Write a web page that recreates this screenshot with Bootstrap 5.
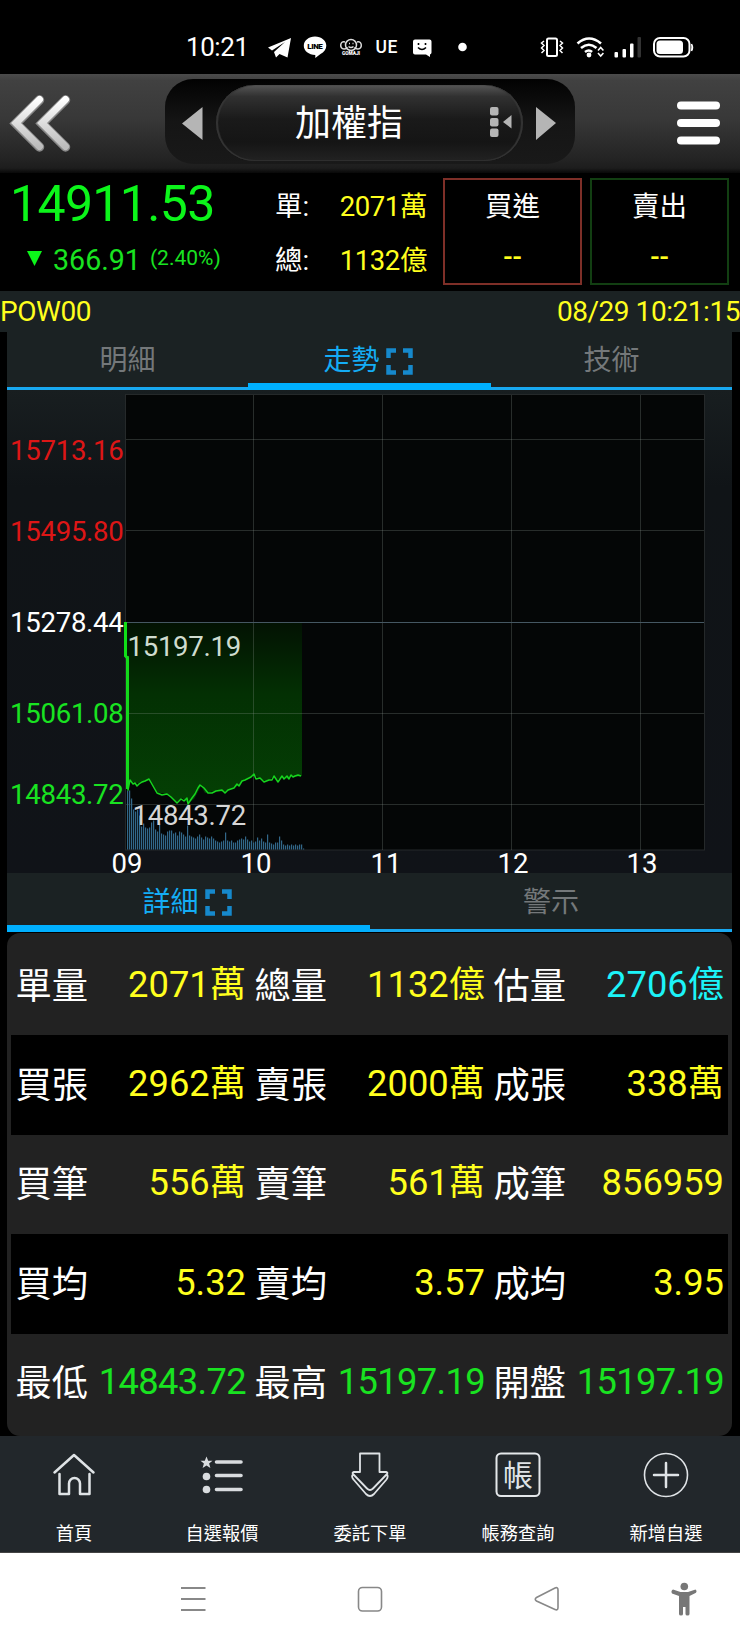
<!DOCTYPE html>
<html lang="zh-Hant">
<head>
<meta charset="utf-8">
<meta name="viewport" content="width=device-width, initial-scale=1">
<title>加權指</title>
<link href="https://cdn.jsdelivr.net/npm/bootstrap@5.3.0/dist/css/bootstrap.min.css" rel="stylesheet">
<style>
body{background:#000;color:#fff;font-family:Roboto,"Noto Sans CJK TC",sans-serif;line-height:1;overflow-x:hidden}
.screen{width:740px;height:1644px;overflow:hidden}
svg{display:block}
.statusbar{height:74px}
.topbar{height:99px;background:linear-gradient(#4b4b4b 0,#414141 6%,#383838 45%,#242424 85%,#1d1d1d 95%,#080808 100%)}
.picker{width:410px;height:85px;margin:0 0 4px -1px;border-radius:28px;background:linear-gradient(#020202,#151515 50%,#191919);padding:6px 52px 3px 51px}
.pill{border-radius:38px;background:linear-gradient(#565656 0,#313131 15%,#1a1a1a 45%,#151515 75%,#222 100%);box-shadow:inset 2px 0 1px #353535,inset -2px 0 1px #353535,inset 0 -1px 1px #303030}
.pill-name{font-size:36px;padding:2px 0 0 79px}
.quote{height:118px;padding:5px 11px 0 0}
.g{color:#0cf51a}.g2{color:#19e321}.y{color:#ffff1e}.c{color:#1cf3f8}
.price{font-size:50px;line-height:52px;letter-spacing:-.65px}
.t28{font-size:28.6px}
.sums{width:152px;font-size:27.5px;padding-top:2px}
.sums>div{height:53.5px}
.sums .y{letter-spacing:-.4px}
.box{width:139px;height:107px;border:2px solid #7e2f28;font-size:27.5px}
.box.sell{border-color:#123f12}
.box .y{font-weight:500}
.codebar{height:41px;background:#1b2223;font-size:28px;letter-spacing:-.45px}
.panel{margin:0 8px 0 7px}
.tabs{background:#1b2223;font-size:28px;color:#74787a}
.tabs>div{border-bottom:3px solid #18a8f0;padding-top:4px}
.tabs>.on{border-bottom:7px solid #00b0ff;color:#14adf5;padding:8px 3px 0 0}
.tabs svg{margin-left:6px}
.tabs1{height:57.5px}.tabs2{height:59.5px}
#chart{overflow:visible}
.details{border-radius:13px;background:#222;height:503px;padding:3px 4px 0;margin-top:1px}
.drow{height:99.4px;font-size:36.3px}
.drow:nth-child(even){background:#000}
.drow>div{padding:0 4px 0 4.5px}
.k{position:relative;top:1px}
.v{position:relative;top:-1px}
.v.g2{letter-spacing:-.65px}
.nav5{height:117px;background:#22272b;font-size:18.2px;border-bottom:1px solid #444}
.cap{margin-top:25px;line-height:20px}
.nav5 svg{margin-top:15px}
.sysbar{height:91px;background:#fff}
</style>
</head>
<body>
<div class="screen d-flex flex-column">
  <header class="statusbar flex-shrink-0">
    <svg width="740" height="74" fill="#fff">
      <text x="186" y="55.5" font-size="26" textLength="63">10:21</text>
      <path d="M268 47.500L291 38l-3.500 19.500-8-3.500-3.500 3.500-2-5.500 11-10-13 8.500z"/>
      <path d="M315 36.500c6.300 0 11.300 4 11.300 9.200 0 3.500-2.300 6.500-5.800 8.200l-5.200 4v-3c-6.500-.2-11.500-4-11.500-9.200 0-5.200 5-9.200 11.200-9.200z"/>
      <text x="307.300" y="49" font-size="8" font-weight="900" fill="#000" textLength="15.500">LINE</text>
      <g fill="none" stroke="#ddd" stroke-width="1.500"><circle cx="351" cy="45" r="5.500"/><path d="M345 42c-5-2-6 7-1 7 2 0 3-1 3-2M357 42c5-2 6 7 1 7-2 0-3-1-3-2M348.500 46.500q2.500 2 5 0M349 43.500h1M352.500 43.500h1"/></g>
      <text x="342" y="55" font-size="4.800" font-weight="900" textLength="18">GOMAJI</text>
      <text x="375.500" y="53" font-size="17.500" font-weight="500" textLength="22">UE</text>
      <path d="M415 39.500h14.500q2 0 2 2v11q0 1.500-1.500 2v2.500l-4-2.500h-11q-2 0-2-2v-11q0-2 2-2z"/>
      <path d="M418.500 43v2M425.500 43v2M418 47.500q4 4 8 0" stroke="#000" stroke-width="1.600" fill="none"/>
      <circle cx="462.500" cy="47" r="4.300"/>
      <rect x="547" y="38.500" width="10" height="17.500" rx="1.500" fill="none" stroke="#fff" stroke-width="2"/>
      <path d="M544 41l-2.500 2 2.500 2.500-2.500 2.500 2.500 2.500-2.500 2.500M560 41l2.500 2-2.500 2.500 2.500 2.500-2.500 2.500 2.500 2.500" fill="none" stroke="#fff" stroke-width="1.500"/>
      <g fill="none" stroke="#fff" stroke-width="2.600"><path d="M577.500 43.500q11.500-10 23.500 0M581 48q8-6.500 15.500 0M585 52q4-3 7 0"/></g>
      <circle cx="589" cy="55" r="2.400"/>
      <path d="M598 50.500l2.700-3 2.700 3M598 53l2.700 3 2.700-3" fill="none" stroke="#fff" stroke-width="1.600"/>
      <rect x="614.500" y="52" width="3.500" height="5.500" rx="1"/><rect x="622.500" y="49" width="3.500" height="8.500" rx="1"/><rect x="630" y="43.500" width="3.500" height="14" rx="1"/><rect x="637.500" y="37" width="3.500" height="20.500" rx="1" fill="#333"/>
      <rect x="654" y="38" width="35.500" height="18.500" rx="6" fill="none" stroke="#fff" stroke-width="2"/>
      <rect x="656.500" y="40.500" width="26.500" height="13.500" rx="3.500"/><path d="M691.500 44q2 3.500 0 7" stroke="#fff" stroke-width="1.500"/>
    </svg>
  </header>

  <nav class="topbar d-flex flex-shrink-0 align-items-center">
    <svg width="166" height="99" class="flex-shrink-0">
      <defs><linearGradient id="ch" x1="0" y1="0" x2="0" y2="1"><stop offset="0" stop-color="#fff"/><stop offset="1" stop-color="#bcbcbc"/></linearGradient></defs>
      <path d="M39.500 26L16 49.500 39.500 73M65.500 26L42 49.500 65.500 73" fill="none" stroke="#888" stroke-width="9.500" stroke-linecap="round"/>
      <path d="M39.500 25.500L16 49 39.500 72.500M65.500 25.500L42 49 65.500 72.500" fill="none" stroke="url(#ch)" stroke-width="7" stroke-linecap="round"/>
    </svg>
    <div class="picker position-relative d-flex flex-shrink-0">
      <svg class="position-absolute top-0 start-0" width="410" height="85" fill="#b5b5b5">
        <path d="M37.500 28v33L17 44.500zM371 28v33L391 44z"/>
      </svg>
      <div class="pill flex-fill d-flex align-items-center justify-content-between">
        <span class="pill-name">加權指</span>
        <svg width="36" height="32" style="margin-right:-3px;margin-top:-4px" fill="#b5b5b5"><rect x="0" y="2" width="8.500" height="8.500" rx="2"/><rect x="0" y="13" width="8.500" height="8.500" rx="2"/><rect x="0" y="23.500" width="8.500" height="8.500" rx="2"/><path d="M13 17l8.500-7v13.500z"/></svg>
      </div>
    </div>
    <svg width="63" height="99" fill="#fff" class="ms-auto"><rect x="0" y="27.500" width="43" height="8" rx="4"/><rect x="0" y="45" width="43" height="8" rx="4"/><rect x="0" y="62.500" width="43" height="8" rx="4"/></svg>
  </nav>

  <section class="quote d-flex flex-shrink-0">
    <div style="width:275px;padding-left:10px">
      <div class="price g">14911.53</div>
      <div class="g2 d-flex" style="padding:15px 0 0 17px">
        <svg width="15" height="16" style="margin-top:6px;margin-right:11px"><path d="M0 0h15L7.500 15z" fill="#0cf51a"/></svg>
        <span class="t28" style="margin-top:1px">366.91</span><span style="font-size:21px;margin:3px 0 0 9px">(2.40%)</span>
      </div>
    </div>
    <div class="sums">
      <div class="d-flex justify-content-between align-items-center"><span>單:</span><span class="y">2071萬</span></div>
      <div class="d-flex justify-content-between align-items-center"><span>總:</span><span class="y">1132億</span></div>
    </div>
    <div class="box ms-auto text-center d-flex flex-column"><span style="padding-top:13px">買進</span><span class="y" style="padding-top:22px">--</span></div>
    <div class="box sell text-center d-flex flex-column" style="margin-left:8px"><span style="padding-top:13px">賣出</span><span class="y" style="padding-top:22px">--</span></div>
  </section>

  <div class="codebar y d-flex flex-shrink-0 justify-content-between align-items-center"><span>POW00</span><span>08/29 10:21:15</span></div>

  <main class="panel flex-shrink-0">
    <div class="tabs tabs1 d-flex">
      <div class="flex-fill w-100 d-flex justify-content-center align-items-center">明細</div>
      <div class="on flex-fill w-100 d-flex justify-content-center align-items-center">走勢<svg width="27" height="27" fill="none" stroke="#1689cc" stroke-width="4.500"><path d="M2.500 10V2.500H10M17 2.500h7.500V10M24.500 17v7.500H17M10 24.500H2.500V17"/></svg></div>
      <div class="flex-fill w-100 d-flex justify-content-center align-items-center">技術</div>
    </div>
    <svg id="chart" width="725" height="483" viewBox="7 390 725 483" font-size="27.600">
      <defs>
        <linearGradient id="bg" x1="0" y1="0" x2="0" y2="1"><stop offset="0" stop-color="#181e20"/><stop offset=".2" stop-color="#101417"/><stop offset="1" stop-color="#101318"/></linearGradient>
        <linearGradient id="fill" x1="0" y1="0" x2="0" y2="1"><stop offset="0" stop-color="#031203"/><stop offset=".4" stop-color="#033003"/><stop offset="1" stop-color="#044004"/></linearGradient>
      </defs>
      <rect x="7" y="390" width="725" height="483" fill="url(#bg)"/>
      <rect x="125.500" y="394.500" width="579" height="455.500" fill="#040606" stroke="#25292a"/>
      <path fill="url(#fill)" d="M126 622H302V776L296 777 292 776 288 779 282 777 277 780 274 776 268 781 262 780 254 775 244 780 236 787 225 792 214 791 205 793 201 786 194 799 188 803 182 798 176 802 166 794 156 792 149 780 140 784 130 781H127z"/>
      <path d="M253.500 395v455M382.500 395v455M511.500 395v455M640.500 395v455M126 439.500H704M126 530.500H704M126 713.500H704M126 804.500H704" stroke="#8d998f" stroke-opacity=".27" fill="none"/>
      <path d="M126 622.500H704" stroke="#455762"/>
      <g id="volume"></g>
      <path d="M125.500 622V656L127.500 658V789" fill="none" stroke="#10df18" stroke-width="3"/>
      <path d="M128 656V790L130 780 133 784 135 783 137 786 139 784 142 782 145 781 149 779 153 786 157 793 162 795 167 794 171 797 175 801 177 803 181 799 184 801 187 798 188 804 192 798 195 794 198 788 200 785 204 788 208 793 212 793 216 791 222 790 225 793 228 790 234 788 237 784 239 786 242 781 245 780 251 777 254 774 256 779 260 778 264 782 269 780 272 780 274 776 278 782 282 776 284 779 287 776 289 779 291 775 293 777 295 776 298 775 301 776" fill="none" stroke="#16d51e" stroke-width="1.500" stroke-linejoin="round"/>
      <g text-anchor="end" letter-spacing="-.3"><text x="123.500" y="460" fill="#dd1616">15713.16</text><text x="123.500" y="540.500" fill="#dd1616">15495.80</text><text x="123.500" y="632" fill="#fff">15278.44</text><text x="123.500" y="722.500" fill="#19e321">15061.08</text><text x="123.500" y="804" fill="#19e321">14843.72</text></g>
      <g letter-spacing="-.3"><text x="127.500" y="656" fill="#cfdccf">15197.19</text><text x="132.500" y="825" fill="#d6d6d6">14843.72</text></g>
      <g text-anchor="middle" fill="#fff"><text x="127" y="872.500">09</text><text x="256" y="872.500">10</text><text x="386" y="872.500">11</text><text x="513" y="872.500">12</text><text x="642" y="872.500">13</text></g>
    </svg>
    <div class="tabs tabs2 d-flex">
      <div class="on flex-fill w-100 d-flex justify-content-center align-items-center">詳細<svg width="27" height="27" fill="none" stroke="#1689cc" stroke-width="4.500"><path d="M2.500 10V2.500H10M17 2.500h7.500V10M24.500 17v7.500H17M10 24.500H2.500V17"/></svg></div>
      <div class="flex-fill w-100 d-flex justify-content-center align-items-center">警示</div>
    </div>
    <div class="details" id="details"></div>
  </main>

  <nav class="nav5 row g-0 flex-shrink-0 text-center mt-auto">
    <div class="col"><svg class="mx-auto" width="48" height="48" fill="none" stroke="#dfe3e6" stroke-width="2.500" stroke-linecap="round" stroke-linejoin="round"><path d="M4.500 21.500L24 4l19.500 17.500M9.500 23v20H19V32.500a5.500 5.500 0 0 1 11 0V43h9.500V23"/></svg><div class="cap">首頁</div></div>
    <div class="col"><svg class="mx-auto" width="48" height="48" fill="#d9dcdf"><path d="M8.500 5.500l1.700 4.200 4.300.1-3.400 2.800 1.300 4.400-3.900-2.500L4.600 17l1.300-4.400-3.400-2.800 4.300-.1z"/><circle cx="8.500" cy="25.500" r="3.800"/><circle cx="8.500" cy="38.500" r="3.800"/><path d="M18.500 11h24.500M18.500 24.500h24.500M18.500 38.500h24.500" stroke="#d9dcdf" stroke-width="3.600" stroke-linecap="round"/></svg><div class="cap">自選報價</div></div>
    <div class="col"><svg class="mx-auto" width="48" height="48" fill="none" stroke="#dfe3e6" stroke-width="1.800" stroke-linejoin="round"><path d="M14 2.500h19.500V21h7q1.500.5.500 2L27 37.500q-3 3-6 0L7 23q-1-1.500.5-2H14zM7 23q-2 3 .5 5.500L20 43q4 4 8 0L40.500 28.500q2-2.500.5-5.500"/></svg><div class="cap">委託下單</div></div>
    <div class="col"><svg class="mx-auto" width="48" height="48"><rect x="2.500" y="2.500" width="43" height="42.500" rx="4.500" fill="none" stroke="#e4e7ea" stroke-width="2"/><text x="24" y="35" text-anchor="middle" font-size="30" fill="#dfe3e6">帳</text></svg><div class="cap">帳務查詢</div></div>
    <div class="col"><svg class="mx-auto" width="48" height="48" fill="none" stroke="#dfe3e6"><circle cx="24" cy="24" r="21.500" stroke-width="1.600"/><path d="M24 12v24M12 24h24" stroke-width="2.500" stroke-linecap="round"/></svg><div class="cap">新增自選</div></div>
  </nav>
  <footer class="sysbar flex-shrink-0">
    <svg width="740" height="91" fill="none" stroke="#888" stroke-width="1.600">
      <path d="M181 35h24.500M181 46h24.500M181 57h24.500" stroke-width="2"/>
      <rect x="358.500" y="34.500" width="23" height="23.500" rx="4"/>
      <path d="M536.500 44.500l18.500-9.500q3-1.200 3 2v17.500q0 3.300-3 2L536.500 48q-2.500-1.700 0-3.500z"/>
      <g fill="#777" stroke="none"><circle cx="684.300" cy="33.500" r="3.800"/><path d="M673 36.500l7.500 2.500h7.500l7.500-2.500q2 1.500.5 3.300L689.500 43v18q0 1.500-2 1.500t-2-1.500v-7h-2.500v7q0 1.500-2 1.500t-2-1.500V43l-7-2.500q-1.500-2.500 1-4z"/></g>
    </svg>
  </footer>
</div>
<script>
const rows = [
  [["單量","2071萬","y"],["總量","1132億","y"],["估量","2706億","c"]],
  [["買張","2962萬","y"],["賣張","2000萬","y"],["成張","338萬","y"]],
  [["買筆","556萬","y"],["賣筆","561萬","y"],["成筆","856959","y"]],
  [["買均","5.32","y"],["賣均","3.57","y"],["成均","3.95","y"]],
  [["最低","14843.72","g2"],["最高","15197.19","g2"],["開盤","15197.19","g2"]]
];
document.getElementById("details").innerHTML = rows.map(r => '<div class="drow row g-0">' + r.map(c =>
  `<div class="col-4 d-flex justify-content-between align-items-center"><span class="k">${c[0]}</span><span class="v ${c[2]}">${c[1]}</span></div>`).join("") + '</div>').join("");

const vol = [59,59,51,40,38,40,34,23,26,22,21,22,27,29,20,18,26,16,15,14,18,19,19,16,17,14,18,17,15,13,24,14,13,12,11,13,15,12,10,13,12,11,13,11,9,8,7,8,9,17,9,8,9,7,7,9,10,11,10,13,10,8,9,7,8,12,9,11,8,7,15,7,6,5,7,7,13,9,5,4,5,4,5,4,5,4,5,5,1];
document.getElementById("volume").innerHTML = vol.map((h, i) =>
  `<rect x="${127 + i * 2}" y="${849.5 - h}" width="1.2" height="${h}" fill="#32688a"/>`).join("");
</script>
<script src="https://cdn.jsdelivr.net/npm/bootstrap@5.3.0/dist/js/bootstrap.bundle.min.js"></script>
</body>
</html>
